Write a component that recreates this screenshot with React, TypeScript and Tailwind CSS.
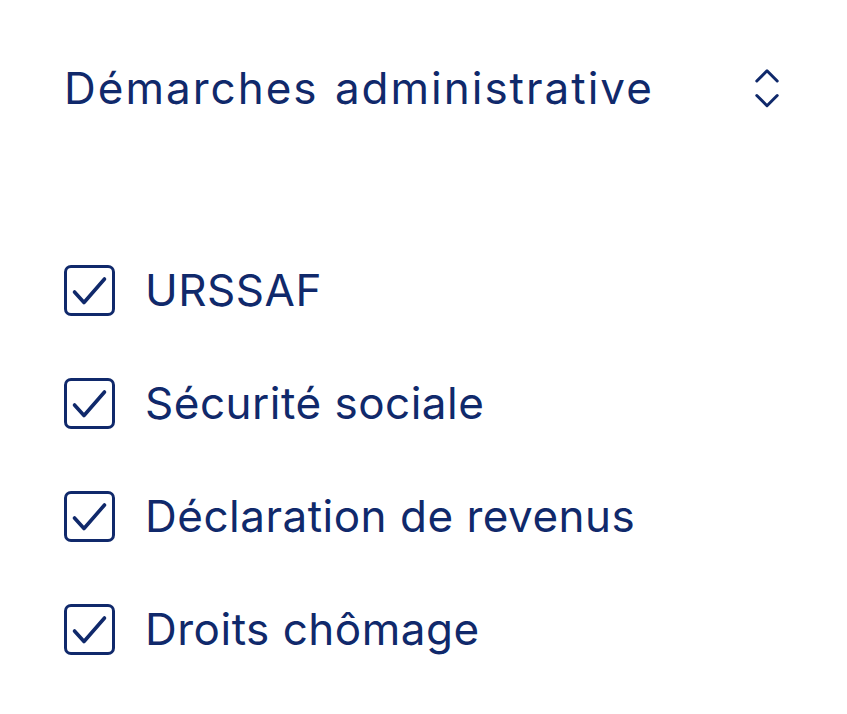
import React from "react";

const items = ["URSSAF", "Sécurité sociale", "Déclaration de revenus", "Droits chômage"];

function Checkbox() {
  return (
    <div className="relative w-[51px] h-[51px] shrink-0 rounded-[7px] border-[3px] border-[#10296b]">
      <svg width="51" height="51" viewBox="0 0 51 51" fill="none" className="absolute left-[-3px] top-[-3px]">
        <polyline
          points="10.5,27 20,37.5 40.5,14"
          stroke="#10296b"
          strokeWidth="3.6"
          strokeLinecap="round"
          strokeLinejoin="round"
        />
      </svg>
    </div>
  );
}

export default function App() {
  return (
    <div className="w-full min-h-[714px] bg-white text-[#10296b] pl-[64px] pr-[68px] pt-[62px] [font-family:Inter,'Noto_Sans',sans-serif]">
      <div className="flex items-center justify-between">
        <span className="text-[44px] leading-[52px] tracking-[2px] [word-spacing:2px]">Démarches administrative</span>
        <svg width="24" height="39" viewBox="0 0 24 39" fill="none">
          <polyline points="1.8,12 12,1.8 22.2,12" stroke="#10296b" strokeWidth="3" strokeLinecap="round" strokeLinejoin="round" />
          <polyline points="1.8,26.5 12,36.7 22.2,26.5" stroke="#10296b" strokeWidth="3" strokeLinecap="round" strokeLinejoin="round" />
        </svg>
      </div>
      <div className="mt-[150px] flex flex-col gap-[61px]">
        {items.map((t) => (
          <div key={t} className="flex items-center gap-[30px]">
            <Checkbox />
            <span className="text-[44px] leading-[52px] tracking-[0.5px]">{t}</span>
          </div>
        ))}
      </div>
    </div>
  );
}
